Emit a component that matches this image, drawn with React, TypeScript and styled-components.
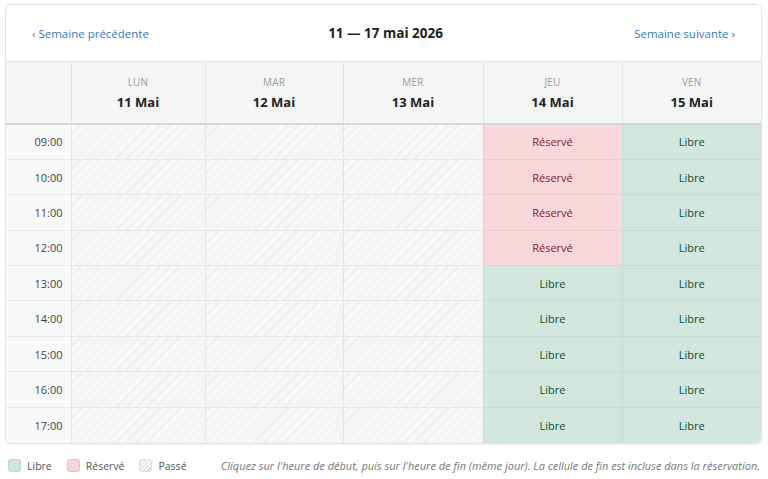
import React from 'react'
import styled, { createGlobalStyle } from 'styled-components'

const GlobalStyle = createGlobalStyle`
  html, body {
    margin: 0;
    padding: 0;
    background: #ffffff;
    font-family: "Open Sans", "Noto Sans", "Liberation Sans", sans-serif;
    color: #212529;
  }
`

const HATCH = 'repeating-linear-gradient(-45deg, #f7f7f7 0px, #f7f7f7 6px, #eaeaea 6px, #eaeaea 7px)'
const SWATCH_HATCH = 'repeating-linear-gradient(-45deg, #f6f6f6 0px, #f6f6f6 2px, #d6d6d6 2px, #d6d6d6 3px)'

const Page = styled.div`
  padding: 4px 6px 0 5px;
`

const Card = styled.div`
  border: 1px solid #e2e4e6;
  border-radius: 6px;
  overflow: hidden;
  box-shadow: 0 1px 2px rgba(0, 0, 0, 0.06);
  background: #fff;
`

const Toolbar = styled.div`
  height: 56px;
  display: flex;
  align-items: center;
  justify-content: space-between;
  padding: 0 26px 0 26px;
  border-bottom: 1px solid #e2e4e6;
`

const NavLink = styled.a`
  font-size: 11.5px;
  color: #2f7bbf;
  text-decoration: none;
  cursor: pointer;
`

const Title = styled.h2`
  margin: 0 12px 0 0;
  font-size: 13.5px;
  font-weight: 700;
  color: #1d1f21;
`

const Grid = styled.table`
  width: 100%;
  border-collapse: collapse;
  table-layout: fixed;
`

const HeadRow = styled.tr`
  height: 62px;
`

const BodyRow = styled.tr`
  height: 35.4px;
`

const HeadCell = styled.th`
  padding: 0;
  background: #f4f5f5;
  border-left: 1px solid #e2e4e6;
  border-bottom: 2px solid #d4d6d8;
  font-weight: normal;
  text-align: center;
  vertical-align: middle;
  &:first-child {
    border-left: 0;
  }
`

const DayName = styled.div`
  font-size: 10px;
  color: #9a9c9e;
  text-transform: uppercase;
  letter-spacing: 0.2px;
`

const DayDate = styled.div`
  margin-top: 4px;
  font-size: 13px;
  font-weight: 700;
  color: #222;
`

const TimeCell = styled.td`
  padding: 0 8px 0 0;
  text-align: right;
  font-size: 11px;
  color: #444;
  background: #f8f9f9;
  border-bottom: 1px solid #e4e6e8;
  tr:last-child & {
    border-bottom: 0;
  }
`

type SlotState = 'libre' | 'reserve' | 'passe'

const slotBg: Record<SlotState, string> = {
  libre: '#d1e7dd',
  reserve: '#f8d7da',
  passe: HATCH,
}

const slotColor: Record<SlotState, string> = {
  libre: '#0f5132',
  reserve: '#842029',
  passe: 'transparent',
}

const slotLine: Record<SlotState, string> = {
  libre: '#c4ddd1',
  reserve: '#efc9cd',
  passe: '#e4e6e8',
}

const Slot = styled.td<{ $state: SlotState }>`
  padding: 0;
  text-align: center;
  font-size: 11px;
  background: ${p => slotBg[p.$state]};
  color: ${p => slotColor[p.$state]};
  border-left: 1px solid ${p => slotLine[p.$state]};
  border-bottom: 1px solid ${p => slotLine[p.$state]};
  cursor: ${p => (p.$state === 'libre' ? 'pointer' : 'default')};
  tr:last-child & {
    border-bottom: 0;
  }
`

const Legend = styled.div`
  display: flex;
  align-items: center;
  height: 44px;
  padding: 0 2px 0 3px;
  font-size: 10.5px;
  color: #555;
`

const LegendItem = styled.span`
  display: inline-flex;
  align-items: center;
  margin-right: 15px;
`

const Swatch = styled.span<{ $state: SlotState }>`
  display: inline-block;
  width: 13px;
  height: 13px;
  margin-right: 6px;
  border-radius: 3px;
  background: ${p => (p.$state === 'passe' ? SWATCH_HATCH : slotBg[p.$state])};
  border: 1px solid ${p => (p.$state === 'libre' ? '#b9d8c9' : p.$state === 'reserve' ? '#f1bcc1' : '#dcdcdc')};
  box-sizing: border-box;
`

const Hint = styled.span`
  margin-left: auto;
  font-style: italic;
  color: #777;
  font-size: 11px;
`

const days = [
  { name: 'Lun', date: '11 Mai' },
  { name: 'Mar', date: '12 Mai' },
  { name: 'Mer', date: '13 Mai' },
  { name: 'Jeu', date: '14 Mai' },
  { name: 'Ven', date: '15 Mai' },
]

const hours = ['09:00', '10:00', '11:00', '12:00', '13:00', '14:00', '15:00', '16:00', '17:00']

const stateFor = (day: number, hour: number): SlotState => {
  if (day < 3) return 'passe'
  if (day === 3 && hour < 4) return 'reserve'
  return 'libre'
}

const label: Record<SlotState, string> = {
  libre: 'Libre',
  reserve: 'Réservé',
  passe: '',
}

const widths = [65, 134, 138, 140, 139, 139]

const App = () => (
  <Page>
    <GlobalStyle />
    <Card>
      <Toolbar>
        <NavLink>‹ Semaine précédente</NavLink>
        <Title>11 — 17 mai 2026</Title>
        <NavLink>Semaine suivante ›</NavLink>
      </Toolbar>
      <Grid>
        <colgroup>
          {widths.map((w, k) => <col key={k} style={{ width: w }} />)}
        </colgroup>
        <thead>
          <HeadRow>
            <HeadCell />
            {days.map(d => (
              <HeadCell key={d.date}>
                <DayName>{d.name}</DayName>
                <DayDate>{d.date}</DayDate>
              </HeadCell>
            ))}
          </HeadRow>
        </thead>
        <tbody>
          {hours.map((h, hi) => (
            <BodyRow key={h}>
              <TimeCell>{h}</TimeCell>
              {days.map((d, di) => {
                const s = stateFor(di, hi)
                return <Slot key={d.date} $state={s}>{label[s]}</Slot>
              })}
            </BodyRow>
          ))}
        </tbody>
      </Grid>
    </Card>
    <Legend>
      <LegendItem><Swatch $state="libre" />Libre</LegendItem>
      <LegendItem><Swatch $state="reserve" />Réservé</LegendItem>
      <LegendItem><Swatch $state="passe" />Passé</LegendItem>
      <Hint>Cliquez sur l'heure de début, puis sur l'heure de fin (même jour). La cellule de fin est incluse dans la réservation.</Hint>
    </Legend>
  </Page>
)

export default App
